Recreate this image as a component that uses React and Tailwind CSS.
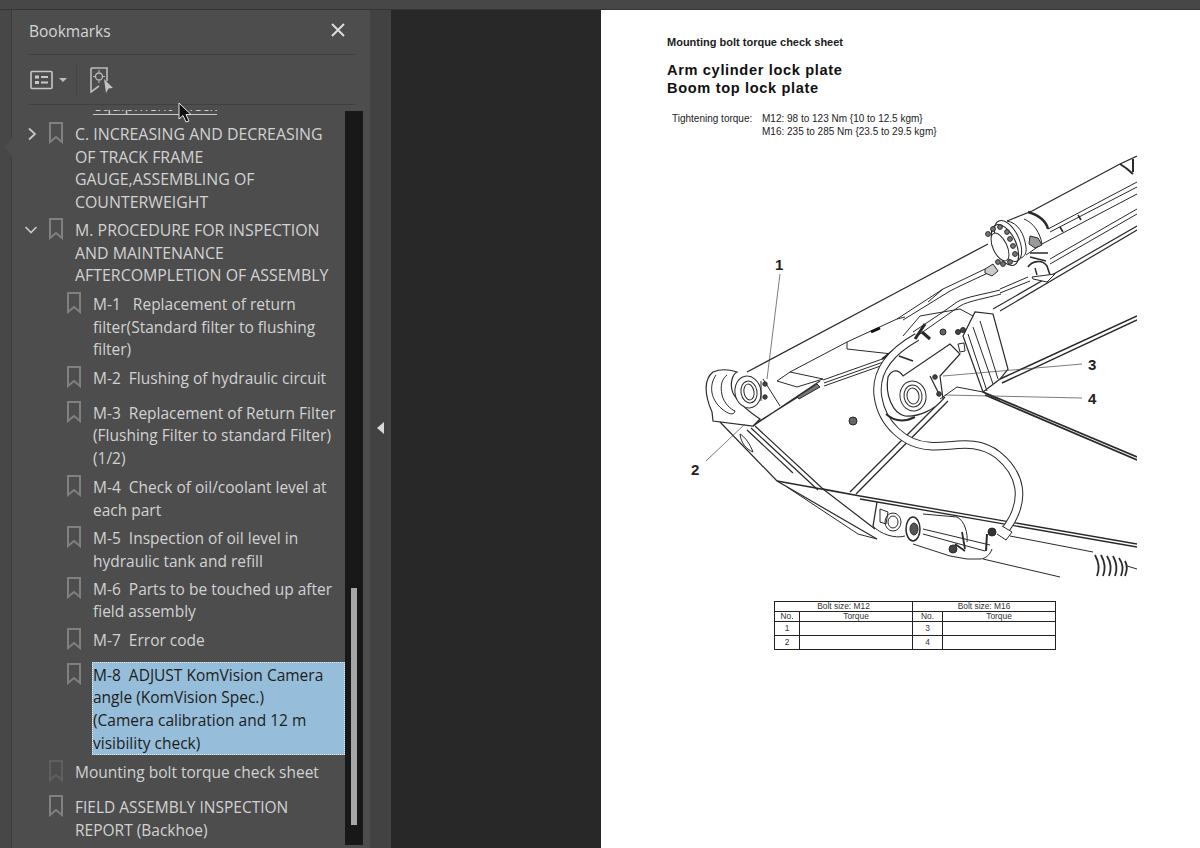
const FONT = "font-['Open_Sans','Noto_Sans',sans-serif]";

const rows = [
  { level: 1, top: 8, chevron: "right", caps: true, lines: ["C. INCREASING AND DECREASING", "OF TRACK FRAME", "GAUGE,ASSEMBLING OF", "COUNTERWEIGHT"] },
  { level: 1, top: 5, chevron: "down", caps: true, lines: ["M. PROCEDURE FOR INSPECTION", "AND MAINTENANCE", "AFTERCOMPLETION OF ASSEMBLY"] },
  { level: 2, top: 6, lines: ["M-1   Replacement of return", "filter(Standard filter to flushing", "filter)"] },
  { level: 2, top: 6, lines: ["M-2  Flushing of hydraulic circuit"] },
  { level: 2, top: 12, lines: ["M-3  Replacement of Return Filter", "(Flushing Filter to standard Filter)", "(1/2)"] },
  { level: 2, top: 6, lines: ["M-4  Check of oil/coolant level at", "each part"] },
  { level: 2, top: 6, lines: ["M-5  Inspection of oil level in", "hydraulic tank and refill"] },
  { level: 2, top: 5, lines: ["M-6  Parts to be touched up after", "field assembly"] },
  { level: 2, top: 6, lines: ["M-7  Error code"] },
  { level: 2, top: 12, selected: true, lines: ["M-8  ADJUST KomVision Camera", "angle (KomVision Spec.)", "(Camera calibration and 12 m", "visibility check)"] },
  { level: 1, top: 6, faint: true, lines: ["Mounting bolt torque check sheet"] },
  { level: 1, top: 13, lines: ["FIELD ASSEMBLY INSPECTION", "REPORT (Backhoe)"] },
];

// flange bolts of the arm cylinder
const bolts = [
  [988, 235], [993, 230], [1000, 228], [1007, 233], [1010, 240],
  [1013, 247], [1015, 255], [1010, 263], [1003, 265], [998, 263],
];

function BookmarkIcon({ faint }) {
  return (
    <svg width="14" height="22" viewBox="0 0 14 22" fill="none" className="shrink-0">
      <path d="M1 1H13V20L7 15L1 20Z" stroke={faint ? "#5f5f5f" : "#808080"} strokeWidth="2" />
    </svg>
  );
}

function Chevron({ dir }) {
  return (
    <svg width="16" height="14" viewBox="0 0 16 14" fill="none" className="shrink-0">
      {dir === "right" ? (
        <path d="M5 1.5L11 7L5 12.5" stroke="#c8c8c8" strokeWidth="1.7" />
      ) : (
        <path d="M1.5 4L7 9.5L12.5 4" stroke="#c8c8c8" strokeWidth="1.7" />
      )}
    </svg>
  );
}

function Row({ level, top, chevron, lines, selected, faint, caps }) {
  const size = caps ? "text-[15.9px]" : "text-[15.5px]";
  return (
    <div className="flex items-start" style={{ marginTop: top }}>
      <div className="shrink-0 pl-[12px] pt-[4px]" style={{ width: level === 1 ? 37 : 55 }}>
        {chevron && <Chevron dir={chevron} />}
      </div>
      <div className="w-[26px] shrink-0 -mt-px">
        <BookmarkIcon faint={faint} />
      </div>
      <div
        className={
          selected
            ? `flex-1 -ml-px pl-px -mt-[2px] pt-[2px] bg-[#96bdd9] text-[#1c1c1c] ${size} leading-[22.7px] outline-dotted outline-1 -outline-offset-1 outline-[#dfe9f0]`
            : `flex-1 text-[#d2d2d2] ${size} leading-[22.7px]`
        }
      >
        {lines.map((l) => (
          <div key={l} className="whitespace-pre">{l}</div>
        ))}
      </div>
    </div>
  );
}

function Drawing() {
  const hose = "M917 338C892 352 874 372 878 398C882 425 905 446 930 447C950 449 975 438 998 456C1020 474 1028 500 1006 530";
  return (
    <svg width="536" height="440" viewBox="601 150 536 440" fill="none" stroke="#2a2a2a" strokeWidth="1" className="block">
      {/* arm cylinder barrel */}
      <path d="M1032 212L1120 165L1137 157" strokeWidth="1.3" />
      <path d="M1120 165C1125 168 1130 172 1133 175M1133 160L1133 173" strokeWidth="2" />
      <path d="M1048 230L1137 183M1050 233L1137 188M1042 245L1137 195" />
      <path d="M1050 260L1137 210M1050 265L1137 215" />
      <path d="M993 310L1137 227M1000 312L1137 231" strokeWidth="1.2" />
      <path d="M1060 228L1063 233M1078 216L1081 221" strokeWidth="1.6" />
      {/* flange */}
      <path d="M1007 222L1032 212" strokeWidth="1.3" />
      <path d="M1028 213C1038 216 1046 222 1048 230" strokeWidth="2.4" />
      <path d="M1007 222C1018 224 1024 234 1026 248C1027 254 1024 258 1021 259" />
      <path d="M1024 220C1034 224 1040 234 1042 245L1026 256" />
      <ellipse cx="1005" cy="246" rx="11" ry="22" transform="rotate(-25 1005 246)" fill="#fff" strokeWidth="1.2" />
      <ellipse cx="1008" cy="242" rx="11" ry="22" transform="rotate(-25 1008 242)" strokeWidth="1" />
      <ellipse cx="1000" cy="248" rx="7" ry="15" transform="rotate(-25 1000 248)" fill="#fff" />
      {bolts.map(([x, y]) => (
        <circle key={x + "-" + y} cx={x} cy={y} r="2.4" fill="#777" strokeWidth="1" />
      ))}
      {/* rod */}
      <path d="M903 290L747 373M988 245L903 290" strokeWidth="1.3" />
      {/* clusters beside the flange */}
      <path d="M1030 237L1038 239L1042 246L1035 249L1029 245Z" fill="#999" />
      <path d="M1030 254L1048 254M1030 258L1046 262" strokeWidth="1.5" />
      <path d="M1028 268C1032 262 1042 260 1047 267L1050 276" strokeWidth="1.6" />
      <path d="M1035 269L1037 276" strokeWidth="1.4" />
      <path d="M1032 278L1055 275L1047 283L1033 280Z" fill="#fff" />
      <path d="M960 282L985 270M960 287L990 273" />
      <path d="M985 270L993 265L998 272L992 277L985 274Z" fill="#ccc" />
      <path d="M1000 290L1028 278M1000 294L1030 282" />
      <path d="M943 290L960 282M950 292L960 287M928 303L943 290" />
      {/* boom top plates */}
      <path d="M897 320L943 290M903 321L950 292" />
      <path d="M847 343L897 320L905 318" />
      <path d="M790 373L847 343M847 350L892 355M847 343L847 350" />
      <path d="M777 382L790 373L823 380L797 388Z" />
      <path d="M823 381L888 358M824 384L889 361M824 387L889 364" strokeWidth="1" />
      <path d="M871 333L880 329" stroke="#111" strokeWidth="3" />
      <path d="M753 427L820 382M758 423L817 386" strokeWidth="1.2" />
      <path d="M797 398L817 385L820 388L799 400Z" fill="#777" />
      <path d="M763 380L780 407" />
      <path d="M882 360L895 350M899 357L913 362" strokeWidth="1.8" />
      {/* left end boss */}
      <path d="M713 373C704 380 704 395 712 413L713 422L753 427L760 420C748 412 738 404 733 394C729 384 733 375 737 373C728 370 720 370 713 373Z" fill="#fff" strokeWidth="1.2" />
      <path d="M716 376C709 386 710 400 722 410C728 415 734 417 735 412C730 410 724 404 722 396C720 386 722 380 727 376" />
      <ellipse cx="748" cy="393" rx="13" ry="16" fill="#fff" transform="rotate(-10 748 393)" />
      <ellipse cx="749" cy="393" rx="8" ry="11" transform="rotate(-10 749 393)" />
      <ellipse cx="749" cy="393" rx="5" ry="8" transform="rotate(-10 749 393)" />
      <circle cx="765" cy="385" r="2.2" fill="#444" />
      <circle cx="765" cy="398" r="2.2" fill="#444" />
      <path d="M761 382L761 402" />
      {/* lower boom */}
      <path d="M720 423L777 482L877 540" strokeWidth="1.2" />
      <path d="M755 427L823 490L875 530M751 429L818 491M747 431L793 474" strokeWidth="1.2" />
      <path d="M740 435C745 438 750 445 753 453C746 450 741 444 740 435Z" fill="#fff" />
      <path d="M787 488L858 535L877 540" />
      {/* long lower edge */}
      <path d="M860 497L1137 545M860 500L1137 548" strokeWidth="1.4" />
      <path d="M777 482L860 497M823 490L860 497" strokeWidth="1.3" />
      <circle cx="853" cy="422" r="4" fill="#666" />
      {/* strut */}
      <path d="M850 493L945 398M856 495L948 402" strokeWidth="1.3" />
      {/* gusset arch and pipes above the hose */}
      <path d="M903 337L920 317L960 310L973 317" />
      <path d="M913 333L943 313L957 303C965 298 985 295 1000 291M917 337L947 316L960 307C968 302 987 299 1001 295" />
      {/* hose */}
      <path d={hose} stroke="#2a2a2a" strokeWidth="8.5" />
      <path d={hose} stroke="#fff" strokeWidth="6.5" />
      {/* right link and boss */}
      <path d="M888 378C893 368 900 372 903 377L950 345L960 355L940 377L943 400C935 410 920 418 905 417C892 414 885 395 888 378Z" fill="#fff" strokeWidth="1.2" />
      <path d="M886 415C895 423 905 423 915 418" strokeWidth="2" />
      <ellipse cx="913" cy="397" rx="13" ry="15" fill="#fff" transform="rotate(-10 913 397)" />
      <ellipse cx="913" cy="397" rx="9" ry="11" transform="rotate(-10 913 397)" />
      <ellipse cx="913" cy="397" rx="6" ry="8" transform="rotate(-10 913 397)" />
      <path d="M930 377L940 397" strokeWidth="1.2" />
      <circle cx="935" cy="378" r="2.3" fill="#444" />
      <circle cx="939" cy="395" r="2.3" fill="#444" />
      <path d="M940 400L957 388L983 393L1000 402" />
      <path d="M922 333L930 340M925 325L915 340" strokeWidth="3" />
      <circle cx="943" cy="333" r="3" fill="#666" />
      <circle cx="963" cy="331" r="2.5" fill="#444" />
      <circle cx="958" cy="333" r="2.5" fill="#444" />
      <path d="M958 345L964 344L965 352L960 353Z" fill="#fff" />
      {/* right gusset */}
      <path d="M963 337L975 313L993 315L1008 370L1000 380L983 393Z" fill="#fff" strokeWidth="1.2" />
      <path d="M968 335L987 392M973 328L993 385M980 322L998 380" />
      <path d="M1000 380L1137 317M1002 384L1137 321" strokeWidth="1.5" />
      <path d="M983 393L1137 458M985 396L1137 461" strokeWidth="1.7" />
      {/* lower clamp group */}
      <path d="M877 503L873 527" strokeWidth="1.3" />
      <path d="M873 527C880 535 895 540 905 537" />
      <path d="M880 510L888 513L886 525L880 523Z" fill="#fff" />
      <ellipse cx="893" cy="523" rx="8" ry="9" />
      <ellipse cx="893" cy="523" rx="5" ry="6" />
      <ellipse cx="913" cy="530" rx="7" ry="12" fill="#fff" strokeWidth="1.5" />
      <ellipse cx="914" cy="530" rx="4" ry="6" fill="#555" />
      <path d="M923 515L957 518C965 522 968 535 967 543" />
      <path d="M923 530L990 546M923 535L985 552" />
      <path d="M913 545L950 557L967 560L980 560" />
      <path d="M962 533L965 550M955 545L965 552" strokeWidth="1.8" />
      <circle cx="953" cy="550" r="4" fill="#444" />
      <circle cx="992" cy="533" r="4" fill="#333" />
      <path d="M987 535L986 552" strokeWidth="2" />
      <path d="M992 550C990 556 985 560 980 560" />
      <path d="M1002 527L1012 533L1006 541L997 535" fill="#fff" />
      <path d="M1010 537L1093 553M983 560L1060 578" />
      {/* bellows */}
      <path d="M1095 556C1100 565 1099 572 1097 577M1101 556C1106 565 1105 572 1103 577M1107 557C1112 565 1111 572 1109 577M1113 557C1118 566 1117 572 1115 577M1119 559C1124 566 1123 572 1121 577M1125 562C1128 567 1127 572 1125 577" strokeWidth="1.8" />
      <path d="M1127 567L1137 570" />
      {/* leaders */}
      <path d="M780 275L767 380M706 462L745 425M1082 365L943 377M1082 399L945 396" strokeWidth="0.7" stroke="#444" />
      <g fill="#222" stroke="none" fontFamily="'Liberation Sans',sans-serif" fontSize="15" fontWeight="700">
        <text x="775" y="271">1</text>
        <text x="691" y="476">2</text>
        <text x="1088" y="371">3</text>
        <text x="1088" y="405">4</text>
      </g>
    </svg>
  );
}

function TorqueTable() {
  const cell = "border border-[#222] p-0 text-center font-normal";
  return (
    <table className="ml-[173px] mt-[12px] w-[282px] border-collapse table-fixed text-[8.4px] leading-[9px] text-[#333]">
      <colgroup>
        <col className="w-[25px]" />
        <col className="w-[113px]" />
        <col className="w-[30px]" />
        <col />
      </colgroup>
      <tbody>
        <tr className="h-[9px]">
          <th colSpan={2} className={cell}>Bolt size: M12</th>
          <th colSpan={2} className={cell}>Bolt size: M16</th>
        </tr>
        <tr className="h-[10px]">
          <td className={cell}>No.</td>
          <td className={cell}>Torque</td>
          <td className={cell}>No.</td>
          <td className={cell}>Torque</td>
        </tr>
        <tr className="h-[14px]">
          <td className={cell}>1</td>
          <td className={cell}></td>
          <td className={cell}>3</td>
          <td className={cell}></td>
        </tr>
        <tr className="h-[14px]">
          <td className={cell}>2</td>
          <td className={cell}></td>
          <td className={cell}>4</td>
          <td className={cell}></td>
        </tr>
      </tbody>
    </table>
  );
}

export default function App() {
  return (
    <div className={`w-[1200px] h-[848px] overflow-hidden flex flex-col bg-[#3b3b3b] relative ${FONT}`}>
      <div className="h-[10px] shrink-0 bg-[#474747] border-b border-[#343434]" />
      <div className="flex flex-1 min-h-0">
        {/* left rail */}
        <div className="w-[12px] shrink-0 bg-[#474747] border-r border-[#3c3c3c] relative">
          <div className="absolute top-[127px] -right-px w-0 h-0 border-y-[10px] border-y-transparent border-r-[7px] border-r-[#4d4d4d]" />
        </div>

        {/* bookmarks panel */}
        <aside className="w-[358px] shrink-0 bg-[#4d4d4d] flex flex-col pl-[17px] pr-[7px] relative">
          <div className="h-[45px] mr-[8px] shrink-0 flex items-center justify-between border-b border-[#3f3f3f]">
            <span className="text-[#d6d6d6] text-[15.5px]">Bookmarks</span>
            <svg width="14" height="14" viewBox="0 0 14 14" className="mr-[10px] mb-[4px]" fill="none">
              <path d="M1 1L13 13M13 1L1 13" stroke="#dcdcdc" strokeWidth="2" />
            </svg>
          </div>
          <div className="h-[50px] mr-[8px] shrink-0 flex items-center border-b border-[#3f3f3f]">
            <svg width="24" height="20" viewBox="0 0 24 20" fill="none" className="ml-px">
              <rect x="1" y="1.5" width="21" height="17" rx="1" stroke="#c8c8c8" strokeWidth="1.6" />
              <rect x="5" y="5.5" width="4" height="3" fill="#c8c8c8" />
              <rect x="5" y="11" width="4" height="3" fill="#c8c8c8" />
              <path d="M11 7H18M11 12.5H18" stroke="#c8c8c8" strokeWidth="1.8" />
            </svg>
            <div className="ml-[5px] w-0 h-0 border-x-[4px] border-x-transparent border-t-[4px] border-t-[#bdbdbd]" />
            <div className="ml-[9px] w-px h-[32px] bg-[#454545]" />
            <svg width="24" height="26" viewBox="0 0 24 26" fill="none" className="ml-[13px]">
              <path d="M1 1H17V14M9 19L1 25V1" stroke="#bcbcbc" strokeWidth="1.6" />
              <circle cx="9" cy="9.5" r="3.5" stroke="#bcbcbc" strokeWidth="1.3" />
              <path d="M9 3V5M9 14V16M3 9.5H5M13 9.5H15" stroke="#bcbcbc" strokeWidth="1" />
              <path d="M14 12L23 21L18.5 21.5L16 26Z" fill="#c4c4c4" />
            </svg>
          </div>

          {/* tree */}
          <div className="flex-1 min-h-0 flex -ml-[17px] relative">
            <div className="flex-1 min-w-0 overflow-hidden">
              <div className="mt-[5px] ml-[81px] w-[124px] h-[4px] overflow-hidden border-b border-[#c8c8c8] box-content">
                <div className="-mt-[16px] text-[#d2d2d2] text-[15.5px] leading-[22.7px] whitespace-pre">equipment check</div>
              </div>
              {rows.map((r) => (
                <Row key={r.lines[0]} {...r} />
              ))}
            </div>
            {/* scrollbar */}
            <div className="w-[18px] shrink-0 mt-[6px] mb-[3px] bg-[#181818] relative flex justify-center">
              <div className="absolute top-[477px] w-[6px] h-[237px] bg-[#a6a6a6]" />
            </div>
          </div>
        </aside>

        {/* collapse strip */}
        <div className="w-[21px] shrink-0 bg-[#424242] flex items-center justify-center">
          <div className="mb-[2px] w-0 h-0 border-y-[6px] border-y-transparent border-r-[7px] border-r-[#d8d8d8]" />
        </div>

        {/* document area */}
        <main className="flex-1 min-w-0 bg-[#282828] pl-[210px]">
          <div className="h-full bg-white overflow-hidden text-black font-['Liberation_Sans',Arial,sans-serif]">
            <div className="pl-[66px] pt-[25px] text-[11px] leading-[14px] font-bold text-[#1c1c1c]">Mounting bolt torque check sheet</div>
            <div className="pl-[66px] pt-[13px] text-[14.6px] leading-[17.5px] font-bold tracking-[0.65px] text-[#111]">
              <div>Arm cylinder lock plate</div>
              <div>Boom top lock plate</div>
            </div>
            <div className="pl-[71px] pt-[16px] flex text-[10px] leading-[12.5px] text-[#222]">
              <div className="w-[90px]">Tightening torque:</div>
              <div>
                <div>M12: 98 to 123 Nm {"{"}10 to 12.5 kgm{"}"}</div>
                <div>M16: 235 to 285 Nm {"{"}23.5 to 29.5 kgm{"}"}</div>
              </div>
            </div>
            <div className="mt-[11px]">
              <Drawing />
            </div>
            <TorqueTable />
          </div>
        </main>
      </div>

      {/* mouse pointer */}
      <svg width="16" height="22" viewBox="0 0 16 22" className="absolute left-[178px] top-[102px]">
        <path d="M1 1V17L5 13.5L8 20L11 19L8 12.5H13Z" fill="#111" stroke="#e8e8e8" strokeWidth="1" />
      </svg>
    </div>
  );
}
